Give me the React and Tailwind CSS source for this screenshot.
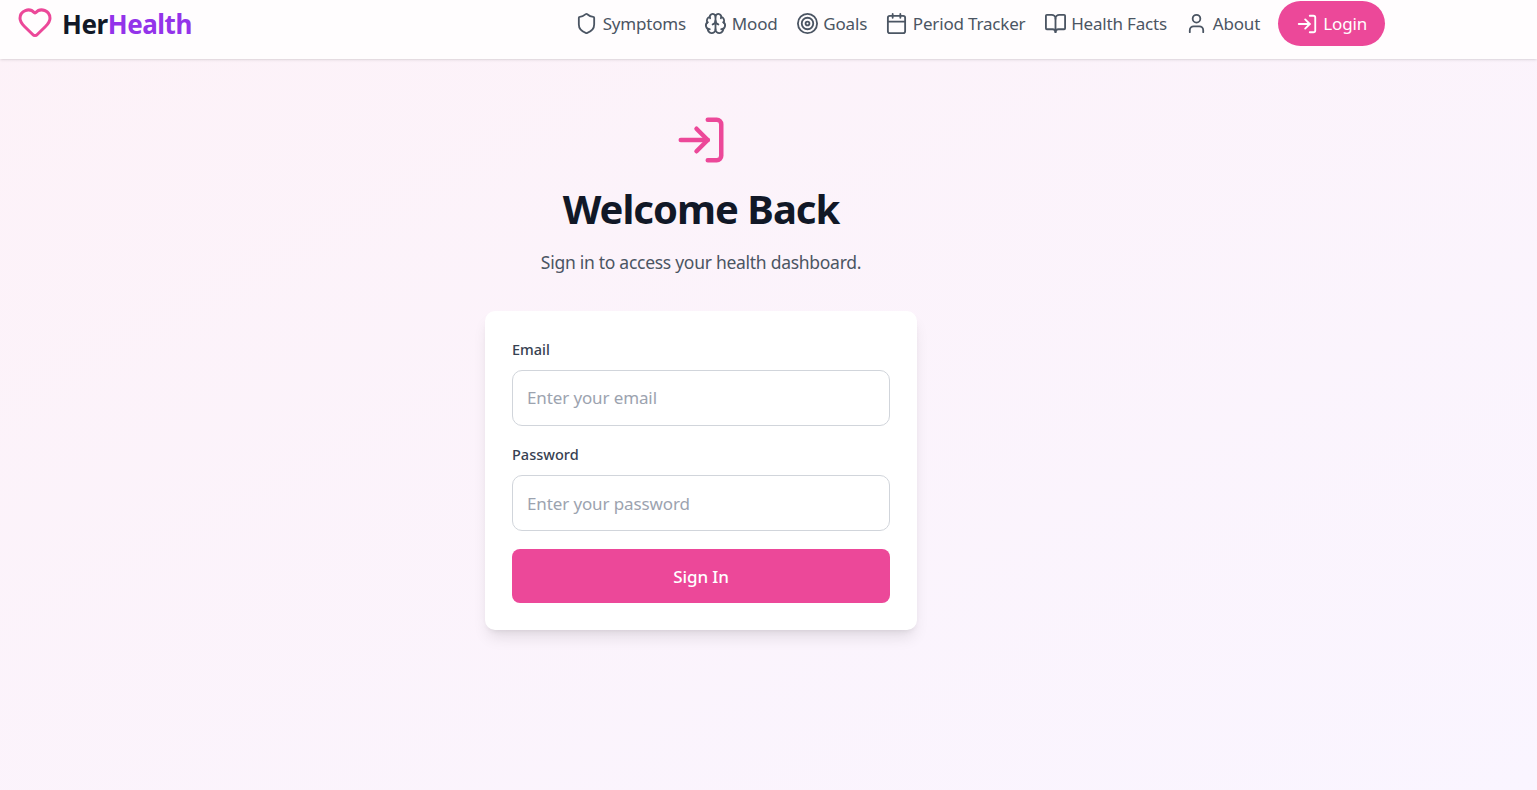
import React from "react";
import { Heart, Shield, Brain, Target, Calendar, BookOpen, User, LogIn } from "lucide-react";

const links = [
  [Shield, "Symptoms"],
  [Brain, "Mood"],
  [Target, "Goals"],
  [Calendar, "Period Tracker"],
  [BookOpen, "Health Facts"],
  [User, "About"],
];

function Field({ label, placeholder, type, className }) {
  return (
    <div className={className}>
      <label className="block text-[14.5px] font-medium leading-[21.5px] text-[#374151] mb-[9.5px]">{label}</label>
      <input
        type={type}
        placeholder={placeholder}
        className="block w-full h-[56px] px-[14px] rounded-[10px] border border-[#d1d5db] bg-white text-[#111827] text-[17px] tracking-[-0.12px] placeholder:text-[#9ca3af] outline-none"
      />
    </div>
  );
}

export default function App() {
  return (
    <div
      className="min-h-[790px] flex flex-col bg-gradient-to-br from-[#fdf2f8] to-[#faf5ff] text-[#111827]"
      style={{ fontFamily: '"Noto Sans", "Open Sans", sans-serif' }}
    >
      <nav className="h-[59px] bg-[#fffdfe] shadow-sm">
        <div className="w-[1403px] pl-[17px] pr-[18px] h-[47px] flex items-center justify-between">
          <div className="flex items-center gap-[9px]">
            <Heart className="w-[36px] h-[36px] text-[#ec4899] -mt-[4px]" strokeWidth={2} />
            <span className="text-[26px] leading-8 font-bold tracking-[-0.45px]">
              Her<span className="text-[#9333ea]">Health</span>
            </span>
          </div>
          <div className="flex items-center gap-[18.25px]">
            {links.map(([Icon, label]) => (
              <a key={label} className="flex items-center gap-[4.5px] text-[#4b5563] text-[17px] tracking-[-0.18px] whitespace-nowrap">
                <Icon className="w-[23px] h-[23px]" strokeWidth={1.9} />
                {label}
              </a>
            ))}
            <button className="flex items-center gap-[5px] h-[45px] px-[18px] rounded-full bg-[#ec4899] text-white text-[17px] tracking-[-0.18px]">
              <LogIn className="w-[22px] h-[22px]" strokeWidth={2} />
              Login
            </button>
          </div>
        </div>
      </nav>

      <main className="w-[1402px] flex flex-col items-center">
        <LogIn className="mt-[54px] w-[54px] h-[54px] text-[#ec4899]" strokeWidth={2} />
        <h1 className="mt-[17px] text-[40px] leading-[50px] font-bold tracking-[-1px] text-[#111827]">Welcome Back</h1>
        <p className="mt-[14px] text-[#4b5563] text-[17.5px] leading-7 tracking-[-0.28px]">Sign in to access your health dashboard.</p>
        <form className="mt-[35px] w-[432px] bg-white rounded-[10px] shadow-lg px-[27px] pt-[27.5px] pb-[27px] flex flex-col">
          <Field label="Email" placeholder="Enter your email" type="email" />
          <Field label="Password" placeholder="Enter your password" type="password" className="mt-[18.5px]" />
          <button type="button" className="mt-[18px] h-[54px] pt-[1px] rounded-lg bg-[#ec4899] text-white text-[17px] font-medium tracking-[-0.1px]">Sign In</button>
        </form>
      </main>
    </div>
  );
}
